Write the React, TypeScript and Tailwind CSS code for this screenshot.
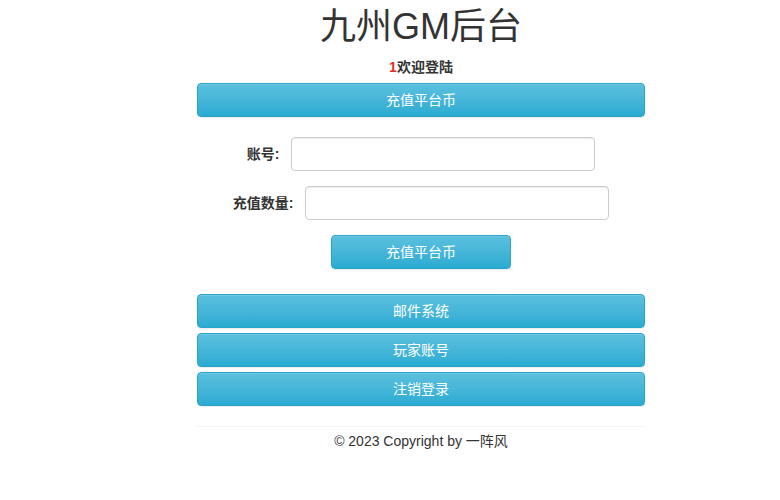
import React from 'react';

const btn =
  'h-[34px] rounded-[4px] border border-[#28a4c9] bg-gradient-to-b from-[#5bc0de] to-[#2aabd2] text-white text-[14px] flex items-center justify-center shadow-[inset_0_1px_0_rgba(255,255,255,0.15),0_1px_1px_rgba(0,0,0,0.075)]';

const input =
  'w-[304px] h-[34px] rounded-[4px] border border-[#ccc] bg-white shadow-[inset_0_1px_1px_rgba(0,0,0,0.075)] px-3 outline-none';

export default function App() {
  return (
    <div
      className="min-h-[500px] bg-white text-[#333] text-[14px]"
      style={{ fontFamily: '"Liberation Sans", Arial, "Noto Sans CJK SC", sans-serif' }}
    >
      <div className="ml-[197px] w-[448px] pt-[7px]">
        <h1 className="text-center text-[36px] leading-[40px] font-normal">九州GM后台</h1>

        <p className="text-center font-bold mt-[10px] leading-[20px]">
          <span className="text-[#d9302c]">1</span>欢迎登陆
        </p>

        <div className={`${btn} mt-[6px]`}>充值平台币</div>

        {/* Recharge form */}
        <div className="mt-[20px] flex flex-col gap-[15px]">
          <div className="flex items-center justify-center gap-[12px]">
            <label className="font-bold">账号:</label>
            <input className={input} />
          </div>
          <div className="flex items-center justify-center gap-[12px]">
            <label className="font-bold">充值数量:</label>
            <input className={input} />
          </div>
        </div>

        <div className="flex justify-center mt-[15px]">
          <div className={`${btn} w-[180px]`}>充值平台币</div>
        </div>

        <div className="mt-[25px] flex flex-col gap-[5px]">
          <div className={btn}>邮件系统</div>
          <div className={btn}>玩家账号</div>
          <div className={btn}>注销登录</div>
        </div>

        <hr className="mt-[20px] border-0 border-t border-[#f3f3f3]" />
        <p className="text-center mt-[4px] leading-[20px]">© 2023 Copyright by 一阵风</p>
      </div>
    </div>
  );
}
